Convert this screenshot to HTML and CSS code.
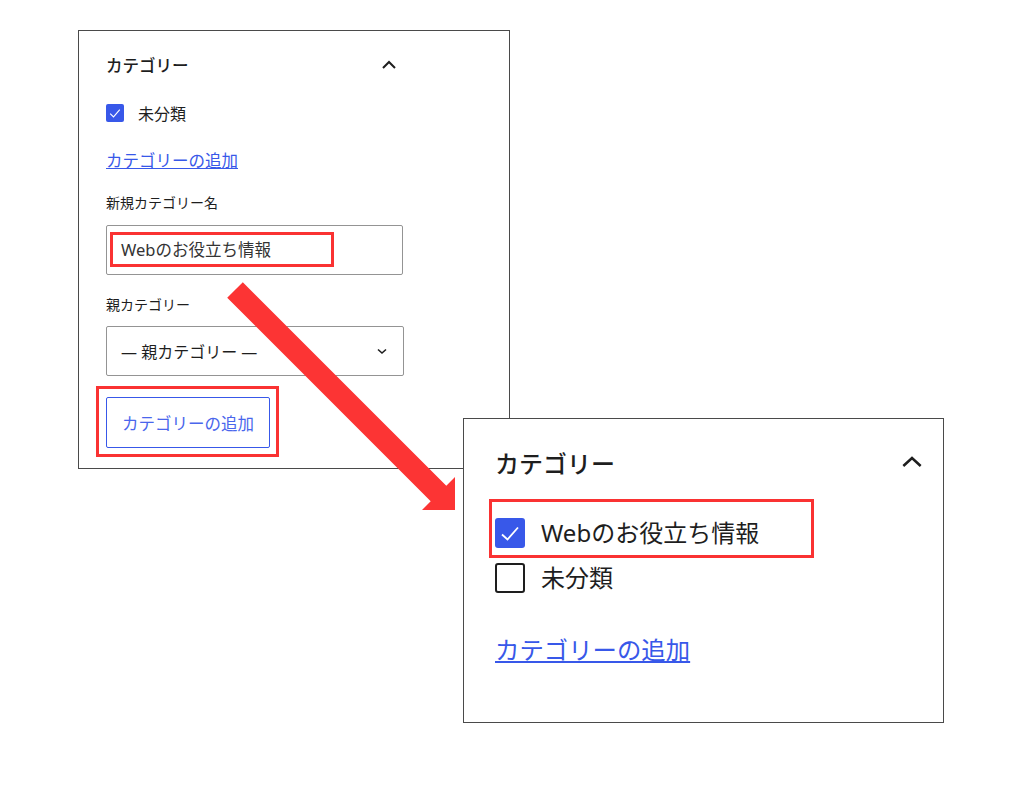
FILE: index.html
```html
<!DOCTYPE html>
<html lang="ja">
<head>
    <meta charset="UTF-8">
    <meta name="viewport" content="width=device-width, initial-scale=1.0">
    <title>カテゴリーの追加</title>
    <link rel="stylesheet" href="styles.css">
</head>
<body>
    <div class="canvas">

        <!-- before: add new category form -->
        <section class="panel panel-form">
            <div class="panel-head">
                <h2 class="panel-title">カテゴリー</h2>
                <svg class="toggle" viewBox="0 0 24 24"><path d="M6 15 L12 9 L18 15"/></svg>
            </div>
            <div class="check-row">
                <span class="box checked"><svg viewBox="0 0 30 30"><path d="M7 16 L12.5 21.5 L23 9.5"/></svg></span>
                <span>未分類</span>
            </div>
            <a class="add-link" href="#">カテゴリーの追加</a>

            <div class="field-label">新規カテゴリー名</div>
            <div class="text-input">
                <span class="mark mark-input">Webのお役立ち情報</span>
            </div>

            <div class="field-label">親カテゴリー</div>
            <div class="select">
                <span>— 親カテゴリー —</span>
                <svg class="select-arrow" viewBox="0 0 18 18"><path d="M5 7.5 L9 11 L13 7.5"/></svg>
            </div>

            <div class="mark mark-button">
                <button class="add-button" type="button">カテゴリーの追加</button>
            </div>
        </section>

        <!-- after: category list -->
        <section class="panel panel-result">
            <div class="panel-head">
                <h2 class="panel-title">カテゴリー</h2>
                <svg class="toggle" viewBox="0 0 24 24"><path d="M5.5 15 L12 9 L18.5 15"/></svg>
            </div>
            <div class="check-row mark mark-row">
                <span class="box checked"><svg viewBox="0 0 30 30"><path d="M7 16.5 L12.5 21.5 L23 9.5"/></svg></span>
                <span>Webのお役立ち情報</span>
            </div>
            <div class="check-row">
                <span class="box"></span>
                <span>未分類</span>
            </div>
            <a class="add-link" href="#">カテゴリーの追加</a>
        </section>

        <svg class="arrow" width="1024" height="800" viewBox="0 0 1024 800">
            <polygon points="227.2,297.8 242.8,282.2 446.3,485.7 455,477 455,510 422,510 430.7,501.3"/>
        </svg>
    </div>
</body>
</html>
```

FILE: styles.css
```css
body{
    margin: 0;
    background: #fff;
    color: #1e1e1e;
    font-family: "Noto Sans", "Noto Sans CJK JP", sans-serif;
}
.canvas{
    position: relative;
    width: 1024px;
    height: 800px;
    overflow: hidden;
}

.panel{
    box-sizing: border-box;
    background: #fff;
    border: 1px solid #4a4a4a;
}
.panel-head{
    display: flex;
    align-items: center;
    justify-content: space-between;
}
.panel-title{
    margin: 0;
    font-weight: 500;
}
.toggle{
    fill: none;
    stroke: #1e1e1e;
    stroke-width: 2;
}

.check-row{
    display: flex;
    align-items: center;
}
.box{
    box-sizing: border-box;
    flex: none;
    border: 2px solid #1e1e1e;
    border-radius: 3px;
    background: #fff;
}
.box.checked{
    border: none;
    background: #3858e9;
}
.box svg{
    display: block;
    width: 100%;
    height: 100%;
    fill: none;
    stroke: #fff;
    stroke-width: 1.8;
}

.add-link{
    display: block;
    width: fit-content;
    color: #3858e9;
    text-decoration: underline;
}

/* red highlight boxes */
.mark{
    box-sizing: border-box;
    border: 3px solid #fa3232;
}

/* ---- form panel ---- */
.panel-form{
    width: 432px;
    margin: 30px 0 0 78px;
    padding: 0 0 11px 27px;
}
.panel-form .panel-head{
    width: 298px;
    height: 68px;
}
.panel-form .panel-title{
    font-size: 16.5px;
}
.panel-form .toggle{
    width: 24px;
    height: 24px;
    margin-right: 3px;
}
.panel-form .check-row{
    height: 28px;
    gap: 14px;
    font-size: 16px;
}
.panel-form .box{
    width: 18px;
    height: 18px;
    border-radius: 2px;
}
.panel-form .add-link{
    margin-top: 22px;
    font-size: 16.5px;
    line-height: 24px;
}
.field-label{
    margin-top: 20px;
    font-size: 14px;
    line-height: 20px;
}
.text-input{
    box-sizing: border-box;
    width: 297px;
    height: 50px;
    margin-top: 12px;
    padding: 6px 3px 0;
    border: 1px solid #949494;
    border-radius: 2px;
    display: flex;
    align-items: flex-start;
}
.mark-input{
    width: 224px;
    padding-left: 8px;
    font-size: 16.5px;
    line-height: 29px;
    color: #333;
}
.select{
    box-sizing: border-box;
    width: 298px;
    height: 50px;
    margin-top: 11px;
    padding: 0 12px 0 14px;
    border: 1px solid #949494;
    border-radius: 2px;
    display: flex;
    align-items: center;
    justify-content: space-between;
    font-size: 16px;
}
.select-arrow{
    width: 18px;
    height: 18px;
    fill: none;
    stroke: #1e1e1e;
    stroke-width: 1.6;
}
.mark-button{
    width: fit-content;
    margin: 10px 0 0 -10px;
    padding: 8px 6px 6px 7px;
}
.add-button{
    display: block;
    width: 164px;
    height: 51px;
    padding: 0;
    border: 1px solid #3858e9;
    border-radius: 2px;
    background: #fff;
    color: #4a66ec;
    font-family: inherit;
    font-size: 16.5px;
}

/* ---- result panel (lies over the form panel) ---- */
.panel-result{
    position: absolute;
    left: 463px;
    top: 418px;
    width: 481px;
    height: 305px;
    padding: 0 19px 0 31px;
}
.panel-result .panel-head{
    height: 80px;
    padding-top: 6px;
    box-sizing: border-box;
}
.panel-result .panel-title{
    font-size: 24px;
}
.panel-result .toggle{
    width: 32px;
    height: 32px;
    margin-right: -4px;
    stroke-width: 1.9;
}
.panel-result .check-row{
    gap: 16px;
    font-size: 24px;
    line-height: 30px;
}
.panel-result .box{
    width: 30px;
    height: 30px;
}
.mark-row{
    width: 325px;
    margin-left: -6px;
    padding: 16px 0 7px 3px;
}
.mark-row + .check-row{
    margin-top: 5px;
}
.panel-result .add-link{
    margin-top: 41px;
    font-size: 24.4px;
    line-height: 32px;
}

.arrow{
    position: absolute;
    left: 0;
    top: 0;
    fill: #fc3434;
    pointer-events: none;
}
```
